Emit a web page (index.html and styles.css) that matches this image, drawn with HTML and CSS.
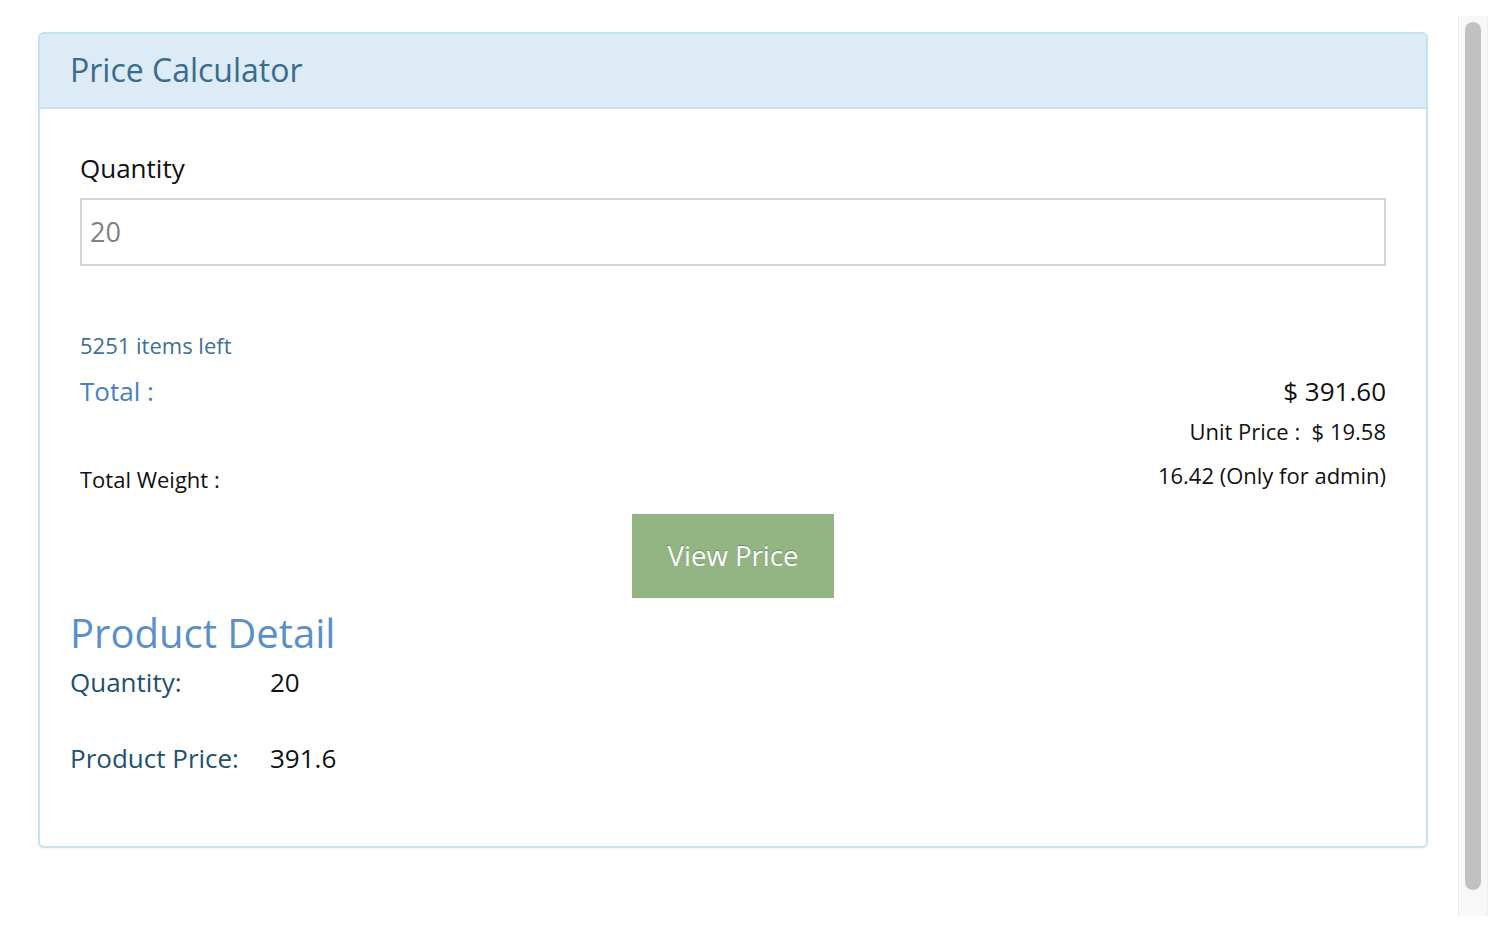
FILE: index.html
```html
<!DOCTYPE html>
<html>
<head>
<meta charset="utf-8">
<title>Price Calculator</title>
<link rel="stylesheet" href="styles.css">
</head>
<body>
<div class="page">
  <div class="panel">
    <div class="panel-heading">
      <h3 class="panel-title">Price Calculator</h3>
    </div>
    <div class="panel-body">
      <div class="calc">
        <label class="qty-label" for="qty">Quantity</label>
        <input class="qty-input" id="qty" type="text" value="20">
        <div class="stock">5251 items left</div>
        <div class="row total-row">
          <span class="total-label">Total :</span>
          <span class="total-value">$ 391.60</span>
        </div>
        <div class="unit-row">Unit Price :&nbsp;&nbsp;$ 19.58</div>
        <div class="row weight-row">
          <span class="weight-label">Total Weight :</span>
          <span class="weight-value">16.42 (Only for admin)</span>
        </div>
        <div class="btn-wrap">
          <button class="btn-view" type="button">View Price</button>
        </div>
      </div>
      <h2 class="detail-title">Product Detail</h2>
      <div class="detail-row first">
        <span class="detail-label">Quantity:</span>
        <span class="detail-value">20</span>
      </div>
      <div class="detail-row">
        <span class="detail-label">Product Price:</span>
        <span class="detail-value">391.6</span>
      </div>
    </div>
  </div>
</div>
<div class="scrollbar"><div class="thumb"></div></div>
</body>
</html>
```

FILE: styles.css
```css
* { box-sizing: border-box; }

html, body {
  margin: 0;
  padding: 0;
  background: #ffffff;
}

body {
  display: flex;
  align-items: flex-start;
  font-family: "Open Sans", "Liberation Sans", sans-serif;
  color: #111;
  height: 934px;
  overflow: hidden;
}

.page {
  padding: 32px 0 0 38px;
}

.panel {
  width: 1390px;
  border: 2px solid #c6e4ef;
  border-radius: 6px;
  background: #fff;
  box-shadow: 0 1px 2px rgba(0, 0, 0, 0.05);
  overflow: hidden;
}

.panel-heading {
  height: 75px;
  background: #dcebf6;
  border-bottom: 2px solid #c6e4ef;
  padding: 0 30px 2px;
  display: flex;
  align-items: center;
}

.panel-title {
  margin: 0;
  font-size: 32px;
  font-weight: 400;
  line-height: 40px;
  color: #3a6c8e;
}

.panel-body {
  padding: 0 30px 70px;
}

.calc {
  padding: 0 10px;
}

.qty-label {
  display: block;
  margin-top: 41px;
  font-size: 26px;
  line-height: 36px;
  color: #111;
}

.qty-input {
  display: block;
  width: 100%;
  height: 68px;
  margin-top: 12px;
  border: 2px solid #d4d4d4;
  padding: 0 8px 2px;
  font-family: "Open Sans", "Liberation Sans", sans-serif;
  font-size: 27px;
  color: #808080;
  outline: none;
  background: #fff;
}

.stock {
  margin-top: 64px;
  font-size: 22px;
  line-height: 30px;
  color: #3e6f94;
}

.row {
  display: flex;
  justify-content: space-between;
  align-items: flex-start;
}

.total-row {
  margin-top: 13px;
  font-size: 26px;
  line-height: 36px;
}

.total-label { color: #4a80c0; }
.total-value { color: #111; }

.unit-row {
  margin-top: 7px;
  text-align: right;
  font-size: 22px;
  line-height: 30px;
  color: #111;
}

.weight-row {
  margin-top: 14px;
  font-size: 22px;
  line-height: 30px;
  color: #111;
}

.weight-label { padding-top: 4px; }

.btn-wrap {
  display: flex;
  justify-content: center;
  margin-top: 20px;
}

.btn-view {
  width: 202px;
  height: 84px;
  border: none;
  border-radius: 0;
  background: #93b583;
  color: #fff;
  font-family: "Open Sans", "Liberation Sans", sans-serif;
  font-size: 27.6px;
  text-shadow: 0 -1px 1px rgba(0, 0, 0, 0.25);
  padding: 0 0 2px;
  cursor: pointer;
}

.detail-title {
  margin: 13px 0 0;
  font-size: 40px;
  font-weight: 400;
  line-height: 44px;
  color: #5a8fc8;
}

.detail-row {
  display: flex;
  margin-top: 40px;
  font-size: 26px;
  line-height: 36px;
}

.detail-row.first { margin-top: 9px; }

.detail-label {
  width: 200px;
  color: #24506f;
}

.detail-value { color: #111; }

.scrollbar {
  margin: 16px 0 0 30px;
  width: 30px;
  height: 900px;
  background: #f8f8f8;
  border-left: 1px solid #e8e8e8;
  border-right: 1px solid #efefef;
  padding-top: 6px;
}

.thumb {
  width: 16px;
  height: 868px;
  margin: 0 auto;
  border-radius: 8px;
  background: #c1c1c1;
}
```
